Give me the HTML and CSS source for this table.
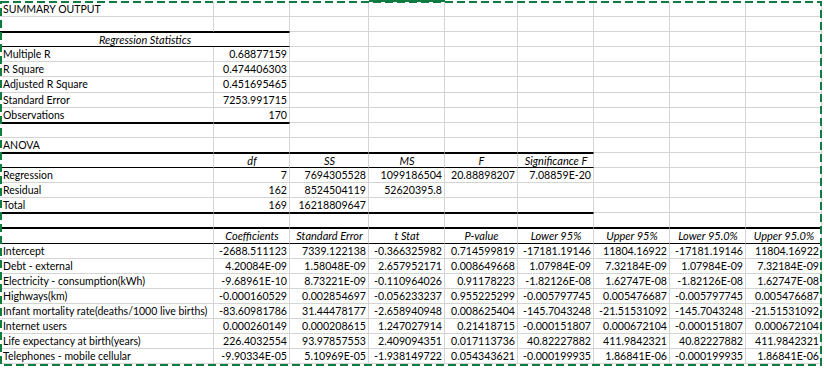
FILE: index.html
```html
<!DOCTYPE html>
<html>
<head>
<meta charset="utf-8">
<title>Summary Output</title>
<link rel="stylesheet" href="styles.css">
</head>
<body>
<div class="page">
  <div class="colhead"><div class="colhead-active"></div></div>
  <div class="sheet">
    <!-- 1 -->
    <div>SUMMARY OUTPUT</div><div></div><div></div><div></div><div></div><div></div><div></div><div></div><div></div>
    <!-- 2 -->
    <div class="kb"></div><div class="kb"></div><div></div><div></div><div></div><div></div><div></div><div></div><div></div>
    <!-- 3 -->
    <div class="h m2 kt kb">Regression Statistics</div><div></div><div></div><div></div><div></div><div></div><div></div><div></div>
    <!-- 4 -->
    <div>Multiple R</div><div class="n">0.68877159</div><div></div><div></div><div></div><div></div><div></div><div></div><div></div>
    <!-- 5 -->
    <div>R Square</div><div class="n">0.474406303</div><div></div><div></div><div></div><div></div><div></div><div></div><div></div>
    <!-- 6 -->
    <div>Adjusted R Square</div><div class="n">0.451695465</div><div></div><div></div><div></div><div></div><div></div><div></div><div></div>
    <!-- 7 -->
    <div>Standard Error</div><div class="n">7253.991715</div><div></div><div></div><div></div><div></div><div></div><div></div><div></div>
    <!-- 8 -->
    <div class="kb">Observations</div><div class="n kb">170</div><div></div><div></div><div></div><div></div><div></div><div></div><div></div>
    <!-- 9 -->
    <div class="kt"></div><div class="kt"></div><div></div><div></div><div></div><div></div><div></div><div></div><div></div>
    <!-- 10 -->
    <div class="kb">ANOVA</div><div class="kb"></div><div class="kb"></div><div class="kb"></div><div class="kb"></div><div class="kb"></div><div></div><div></div><div></div>
    <!-- 11 -->
    <div class="kt kb"></div><div class="h kt kb">df</div><div class="h kt kb">SS</div><div class="h kt kb">MS</div><div class="h kt kb">F</div><div class="h kt kb">Significance F</div><div></div><div></div><div></div>
    <!-- 12 -->
    <div>Regression</div><div class="n">7</div><div class="n">7694305528</div><div class="n">1099186504</div><div class="n">20.88898207</div><div class="n">7.08859E-20</div><div></div><div></div><div></div>
    <!-- 13 -->
    <div>Residual</div><div class="n">162</div><div class="n">8524504119</div><div class="n">52620395.8</div><div></div><div></div><div></div><div></div><div></div>
    <!-- 14 -->
    <div class="kb">Total</div><div class="n kb">169</div><div class="n kb">16218809647</div><div class="kb"></div><div class="kb"></div><div class="kb"></div><div></div><div></div><div></div>
    <!-- 15 -->
    <div class="kt kb"></div><div class="kt kb"></div><div class="kt kb"></div><div class="kt kb"></div><div class="kt kb"></div><div class="kt kb"></div><div class="kb"></div><div class="kb"></div><div class="kb"></div>
    <!-- 16 -->
    <div class="kt kb"></div><div class="h kt kb">Coefficients</div><div class="h kt kb">Standard Error</div><div class="h kt kb">t Stat</div><div class="h kt kb">P-value</div><div class="h kt kb">Lower 95%</div><div class="h kt kb">Upper 95%</div><div class="h kt kb">Lower 95.0%</div><div class="h kt kb">Upper 95.0%</div>
    <!-- 17 -->
    <div>Intercept</div><div class="n">-2688.511123</div><div class="n">7339.122138</div><div class="n">-0.366325982</div><div class="n">0.714599819</div><div class="n">-17181.19146</div><div class="n">11804.16922</div><div class="n">-17181.19146</div><div class="n">11804.16922</div>
    <!-- 18 -->
    <div>Debt - external</div><div class="n">4.20084E-09</div><div class="n">1.58048E-09</div><div class="n">2.657952171</div><div class="n">0.008649668</div><div class="n">1.07984E-09</div><div class="n">7.32184E-09</div><div class="n">1.07984E-09</div><div class="n">7.32184E-09</div>
    <!-- 19 -->
    <div>Electricity - consumption(kWh)</div><div class="n">-9.68961E-10</div><div class="n">8.73221E-09</div><div class="n">-0.110964026</div><div class="n">0.91178223</div><div class="n">-1.82126E-08</div><div class="n">1.62747E-08</div><div class="n">-1.82126E-08</div><div class="n">1.62747E-08</div>
    <!-- 20 -->
    <div>Highways(km)</div><div class="n">-0.000160529</div><div class="n">0.002854697</div><div class="n">-0.056233237</div><div class="n">0.955225299</div><div class="n">-0.005797745</div><div class="n">0.005476687</div><div class="n">-0.005797745</div><div class="n">0.005476687</div>
    <!-- 21 -->
    <div>Infant mortality rate(deaths/1000 live births)</div><div class="n">-83.60981786</div><div class="n">31.44478177</div><div class="n">-2.658940948</div><div class="n">0.008625404</div><div class="n">-145.7043248</div><div class="n">-21.51531092</div><div class="n">-145.7043248</div><div class="n">-21.51531092</div>
    <!-- 22 -->
    <div>Internet users</div><div class="n">0.000260149</div><div class="n">0.000208615</div><div class="n">1.247027914</div><div class="n">0.21418715</div><div class="n">-0.000151807</div><div class="n">0.000672104</div><div class="n">-0.000151807</div><div class="n">0.000672104</div>
    <!-- 23 -->
    <div>Life expectancy at birth(years)</div><div class="n">226.4032554</div><div class="n">93.97857553</div><div class="n">2.409094351</div><div class="n">0.017113736</div><div class="n">40.82227882</div><div class="n">411.9842321</div><div class="n">40.82227882</div><div class="n">411.9842321</div>
    <!-- 24 -->
    <div>Telephones - mobile cellular</div><div class="n">-9.90334E-05</div><div class="n">5.10969E-05</div><div class="n">-1.938149722</div><div class="n">0.054343621</div><div class="n">-0.000199935</div><div class="n">1.86841E-06</div><div class="n">-0.000199935</div><div class="n">1.86841E-06</div>
  </div>
  <svg class="ants" width="824" height="368" viewBox="0 0 824 368" aria-hidden="true">
    <rect x="1" y="2" width="820" height="363" fill="none" stroke="#107c41" stroke-width="2" stroke-dasharray="8 4"/>
  </svg>
</div>
</body>
</html>
```

FILE: styles.css
```css
html, body {
  margin: 0;
  padding: 0;
  background: #fff;
}

.page {
  position: relative;
  width: 824px;
  height: 368px;
  overflow: hidden;
  font-family: Lato, "Open Sans", sans-serif;
  font-size: 10.5px;
  color: #000;
}

.colhead {
  height: 2px;
  display: flex;
}

.colhead-active {
  margin-left: 369px;
  width: 76px;
  background: #107c41;
}

.sheet {
  display: grid;
  grid-template-columns: 214px 76px 79px 76px 73px 76px 76px 76px 76px;
  grid-auto-rows: 15.1px;
}

.sheet > div {
  box-sizing: border-box;
  border-right: 1px solid #d4d4d4;
  border-bottom: 1px solid #d4d4d4;
  line-height: 15px;
  padding: 0 2px 0 3px;
  white-space: nowrap;
  overflow: hidden;
}

.sheet > .n {
  text-align: right;
  font-size: 10.6px;
}

.sheet > .h {
  text-align: center;
  font-style: italic;
  font-size: 11px;
}

.sheet > .m2 {
  grid-column: span 2;
}

.sheet > .kb {
  border-bottom-color: #000;
}

.sheet > .kt {
  border-top: 1px solid #000;
  line-height: 14px;
}

.ants {
  position: absolute;
  left: 0;
  top: 0;
}
```
